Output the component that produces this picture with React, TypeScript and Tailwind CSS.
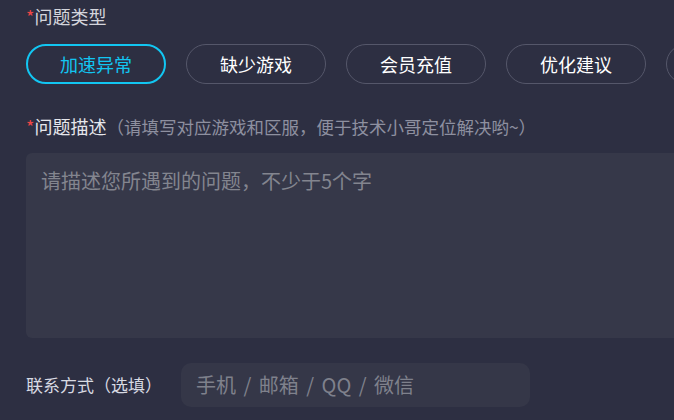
const types = ["加速异常", "缺少游戏", "会员充值", "优化建议", "其他问题"];

const App = () => {
  return (
    <div
      className="w-[674px] h-[420px] overflow-hidden bg-[#2d2f42] pl-[26px] text-[18px]"
      style={{ fontFamily: '"Noto Sans CJK SC", "Noto Sans", sans-serif' }}
    >
      <div className="pt-[4px] leading-[24px] text-[#d4d5dc]">
        <span className="text-[#f04646]">*</span>问题类型
      </div>

      <div className="mt-[16px] flex gap-[20px] w-[900px]">
        {types.map((t, i) => (
          <button
            key={t}
            className={
              i === 0
                ? "w-[140px] h-[40px] shrink-0 rounded-full border-2 border-[#12c6f2] text-[#12c6f2] leading-none"
                : "w-[140px] h-[40px] shrink-0 rounded-full border border-[#55576a] text-white leading-none"
            }
          >
            {t}
          </button>
        ))}
      </div>

      <div className="mt-[30px] whitespace-nowrap leading-[24px] text-[#e6e7ec]">
        <span className="text-[#f04646]">*</span>问题描述
        <span className="text-[17.5px] text-[#8e90a0]">（请填写对应游戏和区服，便于技术小哥定位解决哟~）</span>
      </div>

      <div className="mt-[14px] h-[185px] w-[700px] rounded-[6px] bg-[#363849] px-[15px] pt-[14px] text-[20px] leading-[28px] text-[#83858f]">
        请描述您所遇到的问题，不少于5个字
      </div>

      <div className="mt-[25px] flex items-center">
        <span className="w-[155px] text-[17px] text-[#d8dae2]">联系方式（选填）</span>
        <div className="flex h-[44px] w-[349px] items-center whitespace-pre rounded-[10px] bg-[#353748] px-[15px] text-[20px] text-[#7f818c] [word-spacing:3px]">
          手机 / 邮箱 / QQ / 微信
        </div>
      </div>
    </div>
  );
};

export default App;
